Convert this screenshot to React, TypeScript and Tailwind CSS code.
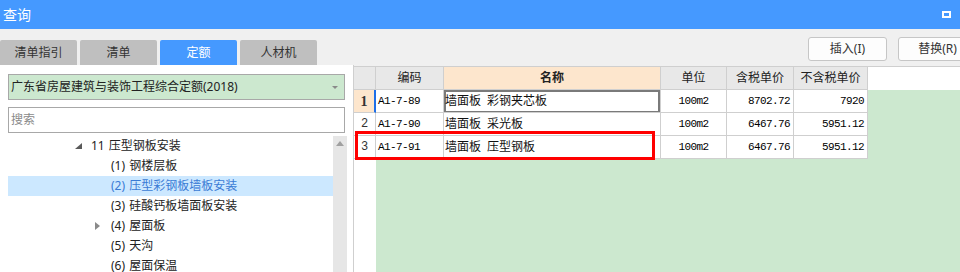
import React from "react";

const SANS = "font-['Noto_Sans','Noto_Sans_CJK_SC',sans-serif]";
const MONO = "font-['Liberation_Mono','Noto_Sans_CJK_SC',monospace] text-[11px] tracking-[-0.6px] text-black";

type TreeItem = { level: 3 | 4; text: string; icon?: "open" | "closed"; selected?: boolean };

const tree: TreeItem[] = [
  { level: 3, text: "11 压型钢板安装", icon: "open" },
  { level: 4, text: "(1) 钢楼层板" },
  { level: 4, text: "(2) 压型彩钢板墙板安装", selected: true },
  { level: 4, text: "(3) 硅酸钙板墙面板安装" },
  { level: 4, text: "(4) 屋面板", icon: "closed" },
  { level: 4, text: "(5) 天沟" },
  { level: 4, text: "(6) 屋面保温" },
];

const rows = [
  { n: "1", code: "A1-7-89", name: "墙面板 彩钢夹芯板", unit: "100m2", tax: "8702.72", notax: "7920" },
  { n: "2", code: "A1-7-90", name: "墙面板 采光板", unit: "100m2", tax: "6467.76", notax: "5951.12" },
  { n: "3", code: "A1-7-91", name: "墙面板 压型钢板", unit: "100m2", tax: "6467.76", notax: "5951.12" },
];

const tabs = [
  { label: "清单指引", active: false },
  { label: "清单", active: false },
  { label: "定额", active: true },
  { label: "人材机", active: false },
];

function TreeRow({ item }: { item: TreeItem }) {
  return (
    <div
      className={`flex items-center h-[20px] shrink-0 ${item.level === 3 ? "pl-[67px]" : "pl-[87px]"} ${
        item.selected ? "bg-[#cce8ff] text-[#3a7bd5]" : "text-[#222222]"
      }`}
    >
      <div className="w-[16px] h-[20px] flex items-center">
        {item.icon === "open" && (
          <svg width="7" height="6" viewBox="0 0 7 6">
            <polygon points="7,0 7,6 0,6" fill="#5a5a5a" />
          </svg>
        )}
        {item.icon === "closed" && (
          <svg width="5" height="8" viewBox="0 0 5 8">
            <polygon points="0,0 5,4 0,8" fill="#8a8a8a" />
          </svg>
        )}
      </div>
      <span className="text-[12px] leading-[20px] whitespace-pre [word-spacing:1px]">{item.text}</span>
    </div>
  );
}

export default function App() {
  return (
    <div className={`w-[960px] h-[272px] overflow-hidden bg-[#f0f0f0] flex flex-col ${SANS}`}>
      {/* title bar */}
      <div className="h-[29px] bg-[#4599ff] flex items-center justify-between pl-[3px] pr-[9px] shrink-0">
        <span className="text-white text-[14px] leading-none">查询</span>
        <div className="w-[9px] h-[7px] border-2 border-white" />
      </div>

      <div className="flex flex-1 min-h-0">
        {/* left column */}
        <div className="w-[354px] flex flex-col shrink-0">
          <div className="h-[36px] pt-[11px] flex gap-[3px] shrink-0">
            {tabs.map((t) => (
              <div
                key={t.label}
                className={`w-[77px] h-[25px] rounded-t-[2px] flex items-center justify-center text-[12px] ${
                  t.active ? "bg-[#4599ff] text-white" : "bg-[#bfbfbf] text-[#333333]"
                }`}
              >
                {t.label}
              </div>
            ))}
          </div>
          <div className="flex-1 bg-white border-r border-[#cfcfcf] flex flex-col min-h-0">
            <div className="mt-[9px] mx-[8px] h-[26px] shrink-0 bg-[#cce8cf] border border-[#a8a8a8] flex items-center justify-between pl-[2px] pr-[6px]">
              <span className="text-[12px] text-[#222222] whitespace-nowrap">广东省房屋建筑与装饰工程综合定额(2018)</span>
              <svg width="6" height="3" viewBox="0 0 6 3">
                <polygon points="0,0 6,0 3,3" fill="#8a8a8a" />
              </svg>
            </div>
            <div className="mt-[7px] mx-[8px] h-[26px] shrink-0 border border-[#a8a8a8] flex items-center pl-[2px]">
              <span className="text-[12px] text-[#8a8a8a]">搜索</span>
            </div>
            <div className="mt-[3px] flex flex-1 min-h-0 pl-[8px] pr-[6px]">
              <div className="flex-1 flex flex-col overflow-hidden">
                {tree.map((t) => (
                  <TreeRow key={t.text} item={t} />
                ))}
              </div>
              <div className="w-[14px] bg-[#e6e6e6] flex justify-center pt-[5px]">
                <svg width="8" height="5" viewBox="0 0 8 5">
                  <polygon points="0,5 4,0 8,5" fill="#a0a0a0" />
                </svg>
              </div>
            </div>
          </div>
        </div>

        {/* right column */}
        <div className="flex-1 min-w-0 flex flex-col">
          <div className="h-[37px] shrink-0 pt-[8px] pl-[454px] flex items-start gap-[11px] overflow-hidden">
            {["插入(I)", "替换(R)"].map((b) => (
              <div
                key={b}
                className="w-[79px] h-[24px] shrink-0 bg-[#fdfdfd] border border-[#c6c6c6] rounded-[3px] flex items-center justify-center text-[12px] text-[#333333]"
              >
                {b}
              </div>
            ))}
          </div>
          <div className="flex-1 relative bg-white border-t border-[#cfcfcf] flex flex-col min-h-0">
            {/* header */}
            <div className="flex h-[23px] shrink-0 text-[12px] text-[#222222]">
              <div className="w-[22px] bg-[#e8e8e8] border-r border-b border-[#cfcfcf]" />
              <div className="w-[68px] bg-[#e8e8e8] border-r border-b border-[#cfcfcf] flex items-center justify-center">编码</div>
              <div className="w-[217px] bg-[#fde6cd] border-r border-b border-[#cfcfcf] flex items-center justify-center font-bold">名称</div>
              <div className="w-[66px] bg-[#e8e8e8] border-r border-b border-[#cfcfcf] flex items-center justify-center">单位</div>
              <div className="w-[67px] bg-[#e8e8e8] border-r border-b border-[#cfcfcf] flex items-center justify-center">含税单价</div>
              <div className="w-[74px] bg-[#e8e8e8] border-r border-b border-[#cfcfcf] flex items-center justify-center">不含税单价</div>
            </div>
            {/* body */}
            <div className="flex flex-1 min-h-0">
              <div className="w-[22px] flex flex-col shrink-0">
                {rows.map((r, i) => (
                  <div
                    key={r.n}
                    className={`h-[23px] border-b flex items-center justify-center ${
                      i === 0
                        ? "bg-[#fde6cd] border-r-2 border-r-[#1e6fe8] border-b-[#cfcfcf] font-['Liberation_Serif',serif] font-bold text-[14px] text-[#333333]"
                        : "border-r border-[#cfcfcf] font-['Liberation_Mono',monospace] text-[12px] text-[#333333]"
                    }`}
                  >
                    {r.n}
                  </div>
                ))}
              </div>
              <div className="flex-1 bg-[#cce8cf]">
                <div className="w-[492px] bg-white flex flex-col">
                  {rows.map((r, i) => (
                    <div key={r.n} className="flex h-[23px] text-[#111111]">
                      <div className={`w-[68px] border-r border-b border-[#cfcfcf] flex items-center pl-[2px] ${MONO}`}>{r.code}</div>
                      <div
                        className={`w-[217px] border-r border-b border-[#cfcfcf] flex items-center pl-[1px] text-[12px] whitespace-pre [word-spacing:3px] ${
                          i === 0 ? "shadow-[inset_2px_2px_0_#7a7a7a,inset_-2px_-1px_0_#7a7a7a]" : ""
                        }`}
                      >
                        {r.name}
                      </div>
                      <div className={`w-[66px] border-r border-b border-[#cfcfcf] flex items-center justify-center ${MONO}`}>{r.unit}</div>
                      <div className={`w-[67px] border-r border-b border-[#cfcfcf] flex items-center justify-end pr-[3px] ${MONO}`}>{r.tax}</div>
                      <div className={`w-[74px] border-r border-b border-[#cfcfcf] flex items-center justify-end pr-[3px] ${MONO}`}>{r.notax}</div>
                    </div>
                  ))}
                </div>
              </div>
            </div>
            {/* red highlight box */}
            <div className="absolute left-[1px] top-[64px] w-[300px] h-[29px] border-[3px] border-[#ff0000] pointer-events-none" />
          </div>
        </div>
      </div>
    </div>
  );
}
